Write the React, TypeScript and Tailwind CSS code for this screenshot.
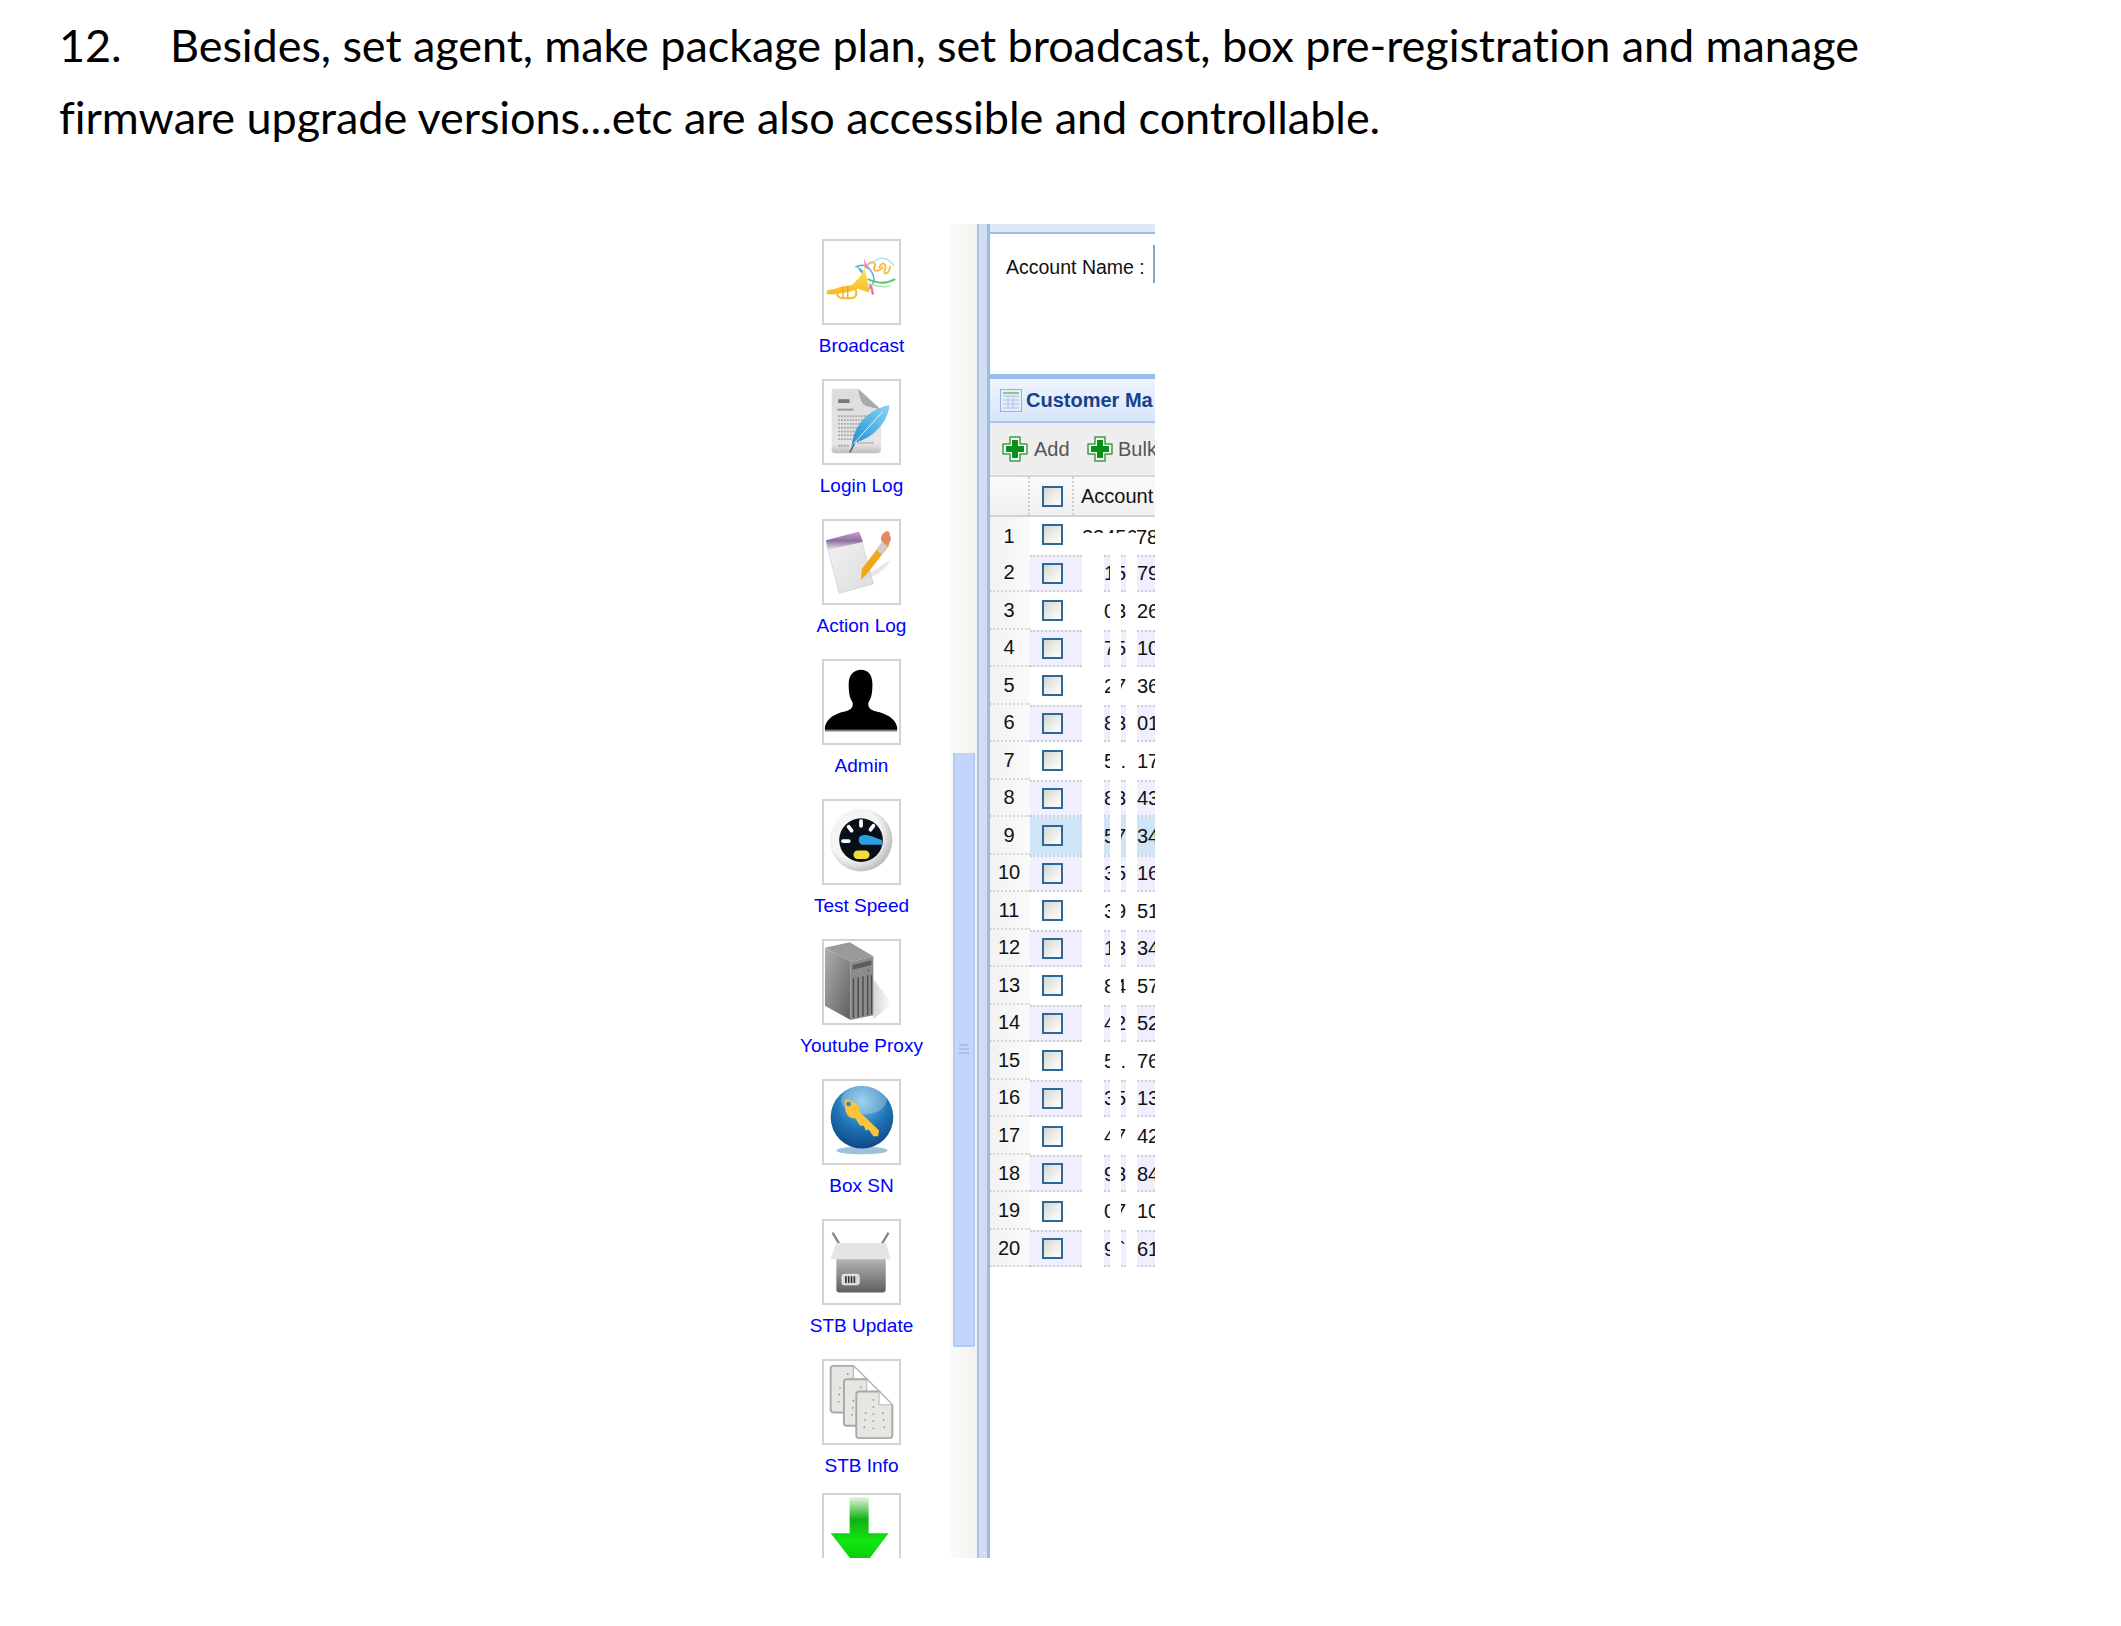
import React from "react";

const rows = [
  ["1", "5", "79"], ["0", "3", "26"], ["7", "5", "10"], ["2", "7", "36"], ["8", "3", "01"],
  ["5", ".", "17"], ["8", "3", "43"], ["5", "7", "34"], ["3", "5", "16"], ["3", "9", "51"],
  ["1", "3", "34"], ["8", "4", "57"], ["4", "2", "52"], ["5", ".", "76"], ["3", "5", "13"],
  ["4", "7", "42"], ["9", "3", "84"], ["0", "7", "10"], ["9", "`", "61"],
];

function Trumpet() {
  return (
    <svg viewBox="0 0 79 86" className="w-full h-full">
      <defs>
        <linearGradient id="tr" x1="0" y1="0" x2="0" y2="1">
          <stop offset="0" stopColor="#ffe566" />
          <stop offset="1" stopColor="#f8b81c" />
        </linearGradient>
      </defs>
      <path d="M33 27 C40 24 47 24 52 36 C54 42 51 48 46 51" fill="none" stroke="#3fb6e8" strokeWidth="1.5" />
      <path d="M44 28 C50 18 56 22 53 28 C51 32 58 33 62 27" fill="none" stroke="#ffb347" strokeWidth="2" />
      <path d="M50 24 C60 14 68 18 74 26" fill="none" stroke="#a8e6ee" strokeWidth="1.5" />
      <path d="M58 28 C62 20 66 24 64 30 C62 36 68 36 70 26" fill="none" stroke="#f5c040" strokeWidth="2" />
      <path d="M46 40 C56 44 64 46 75 40" fill="none" stroke="#50c878" strokeWidth="2" />
      <path d="M47 45 C54 47 62 50 70 47" fill="none" stroke="#a8e6a8" strokeWidth="1.5" />
      <path d="M48 46 C52 50 50 54 52 56" fill="none" stroke="#f070b0" strokeWidth="2.5" />
      <path d="M34 26 L40 30 L44 38 L38 32 Z" fill="#40b0e0" />
      <path d="M42 18 L47 30 L43 28 Z" fill="#f080c0" />
      <path d="M3 52 L30 46 L39 36 L43 28 L48 54 L36 50 L28 53 L12 56 L3 56 Z" fill="url(#tr)" />
      <rect x="14" y="49" width="20" height="11" rx="5" fill="none" stroke="#f8c030" strokeWidth="2.5" />
      <path d="M20 48 V59 M25 47 V59" stroke="#f0a818" strokeWidth="1.5" />
    </svg>
  );
}

function LoginDoc() {
  return (
    <svg viewBox="0 0 79 86" className="w-full h-full">
      <defs>
        <linearGradient id="pg" x1="0" y1="0" x2="0" y2="1">
          <stop offset="0" stopColor="#dcdcdc" />
          <stop offset="0.85" stopColor="#e6e6e6" />
          <stop offset="1" stopColor="#bdbdbd" />
        </linearGradient>
        <linearGradient id="fe" x1="0" y1="1" x2="1" y2="0">
          <stop offset="0" stopColor="#1b8ed0" />
          <stop offset="1" stopColor="#8ad4f5" />
        </linearGradient>
      </defs>
      <path d="M8 11 Q8 8 11 8 H36 L60 30 V72 Q60 76 56 76 H12 Q8 76 8 72 Z" fill="url(#pg)" />
      <path d="M36 8 L60 30 L44 26 Q38 24 36 8 Z" fill="#a9a9a9" />
      <rect x="15" y="19" width="12" height="4" fill="#777" />
      <rect x="14" y="29" width="17" height="2" fill="#999" />
      <path d="M15 37 H50 M15 41 H44 M15 45 H42 M15 49 H38 M15 53 H36 M15 57 H33 M15 61 H30 M35 65 H52 M15 68 H27" stroke="#aaa" strokeWidth="2" strokeDasharray="2 1" />
      <path d="M29 70 C30 50 44 30 69 25 C68 42 52 60 34 64 Z" fill="url(#fe)" />
      <path d="M27 74 L31 66 L62 32" fill="none" stroke="#e8f6fd" strokeWidth="1" />
      <path d="M27 75 L32 66" stroke="#555" strokeWidth="1.5" />
    </svg>
  );
}

function Notepad() {
  return (
    <svg viewBox="0 0 79 86" className="w-full h-full">
      <defs>
        <linearGradient id="np" x1="0" y1="0" x2="1" y2="1">
          <stop offset="0" stopColor="#f4f2f5" />
          <stop offset="1" stopColor="#dcdcdc" />
        </linearGradient>
        <linearGradient id="pu" x1="0" y1="0" x2="0" y2="1">
          <stop offset="0" stopColor="#c9a5c9" />
          <stop offset="0.5" stopColor="#8d6f9d" />
          <stop offset="1" stopColor="#e9e3ef" />
        </linearGradient>
      </defs>
      <path d="M3 25 L38 14 L52 66 L16 76 Z" fill="url(#np)" stroke="#bbb" strokeWidth="0.5" />
      <path d="M2 20 L37 11 L41 22 L4 30 Z" fill="url(#pu)" />
      <path d="M40 50 L63 20 L69 25 L45 56 L39 62 Z" fill="#f0a818" />
      <path d="M55 30 L62 20 L68 24 L61 35 Z" fill="#cfcfcf" />
      <path d="M60 20 C60 10 70 8 69 14 C72 18 70 23 66 26 Z" fill="#e08a60" />
      <path d="M45 56 C55 52 62 44 70 42 C62 54 54 58 44 60 Z" fill="#d8d8d8" opacity="0.6" />
    </svg>
  );
}

function Admin() {
  return (
    <svg viewBox="0 0 79 86" className="w-full h-full">
      <path d="M1 69 C3 60 12 55 22 53 C30 51 31 47 30 43 C27 39 26 33 26 24 C26 14 32 9 39 9 C46 9 51 14 51 24 C51 33 50 39 47 43 C46 47 47 51 55 53 C65 55 75 60 77 69 V73 H1 Z" fill="#000" />
      <rect x="1" y="72" width="76" height="2" fill="#777" />
    </svg>
  );
}

function Gauge() {
  return (
    <svg viewBox="0 0 79 86" className="w-full h-full">
      <defs>
        <radialGradient id="ri" cx="0.4" cy="0.4" r="0.7">
          <stop offset="0.6" stopColor="#f4f4f4" />
          <stop offset="1" stopColor="#a8a8a8" />
        </radialGradient>
      </defs>
      <circle cx="39" cy="41" r="33" fill="url(#ri)" />
      <circle cx="39" cy="41" r="23" fill="#071018" />
      <g stroke="#fff" strokeWidth="4" strokeLinecap="round">
        <path d="M20 42 H26" />
        <path d="M26 27 L29 31" />
        <path d="M39 21 V26" />
        <path d="M52 26 L49 30" />
      </g>
      <path d="M37 38 C41 34 46 35 61 41 V46 H41 C37 46 36 41 37 38 Z" fill="#2e9fdc" />
      <rect x="31" y="52" width="17" height="9" rx="4.5" fill="#f2dc3c" />
    </svg>
  );
}

function Server() {
  return (
    <svg viewBox="0 0 79 86" className="w-full h-full">
      <defs>
        <linearGradient id="sf" x1="0" y1="0" x2="1" y2="1">
          <stop offset="0" stopColor="#b0b0b0" />
          <stop offset="1" stopColor="#5f5f5f" />
        </linearGradient>
        <linearGradient id="sh" x1="0" y1="0" x2="1" y2="0">
          <stop offset="0" stopColor="#d4d4d4" />
          <stop offset="1" stopColor="#fff" />
        </linearGradient>
      </defs>
      <path d="M52 40 L72 66 L52 82 Z" fill="url(#sh)" />
      <path d="M1 7 L27 1 L52 16 L28 22 Z" fill="#9a9a9a" />
      <path d="M1 7 L28 22 V83 L1 68 Z" fill="url(#sf)" />
      <path d="M28 22 L52 16 V78 L28 83 Z" fill="#8c8c8c" />
      <path d="M30 25 L50 20 V25 L30 30 Z" fill="#5c5c5c" />
      <circle cx="47" cy="31" r="1.5" fill="#3c9c4c" />
      <path d="M31 39 V81 M36 38 V80 M41 37 V79 M46 36 V78 M50 36 V77" stroke="#4c4c4c" strokeWidth="1.5" />
    </svg>
  );
}

function KeyBall() {
  return (
    <svg viewBox="0 0 79 86" className="w-full h-full">
      <defs>
        <radialGradient id="bl" cx="0.5" cy="0.25" r="0.85">
          <stop offset="0" stopColor="#7cc4ec" />
          <stop offset="0.5" stopColor="#1f74b6" />
          <stop offset="1" stopColor="#0a3a78" />
        </radialGradient>
      </defs>
      <ellipse cx="40" cy="73" rx="27" ry="4" fill="#9dc2de" />
      <circle cx="40" cy="38" r="33" fill="url(#bl)" />
      <ellipse cx="42" cy="20" rx="24" ry="15" fill="#fff" opacity="0.25" />
      <path d="M22 20 C22 19 28 19 30 22 C36 23 38 28 37 32 L58 52 L57 58 L52 58 L47 51 L44 52 L42 47 L38 47 L33 39 C26 40 21 34 22 20 Z" fill="#fdc33a" />
      <circle cx="26" cy="24" r="2.5" fill="#3a8ac4" />
    </svg>
  );
}

function StbBox() {
  return (
    <svg viewBox="0 0 79 86" className="w-full h-full">
      <defs>
        <linearGradient id="bx" x1="0" y1="0" x2="0" y2="1">
          <stop offset="0" stopColor="#b4b4b4" />
          <stop offset="1" stopColor="#5e5e5e" />
        </linearGradient>
      </defs>
      <path d="M9 12 L16 24 M68 12 L61 24" stroke="#888" strokeWidth="2.5" />
      <path d="M12 25 Q12 23 15 23 H63 Q66 23 66 25 L70 40 H7 Z" fill="#e4e4e4" />
      <path d="M13 40 H65 V72 Q65 75 62 75 H16 Q13 75 13 72 Z" fill="url(#bx)" />
      <rect x="19" y="56" width="18" height="11" rx="2" fill="#d8d8d8" stroke="#eee" />
      <path d="M23 58 V65 M26 58 V65 M29 58 V65 M32 58 V65" stroke="#333" strokeWidth="1.7" />
    </svg>
  );
}

function Page({ x, y }: { x: number; y: number }) {
  return (
    <g transform={`translate(${x} ${y})`}>
      <path d="M0 3 Q0 0 3 0 H24 L38 14 V46 Q38 49 35 49 H3 Q0 49 0 46 Z" fill="#e6e6e3" stroke="#a8a8a8" strokeWidth="2" />
      <path d="M24 0 V14 H38 Z" fill="#fff" stroke="#b0b0b0" />
      <path d="M18 8 V42 M10 22 L8 42 M28 22 L30 42" stroke="#888" strokeWidth="1.5" strokeDasharray="1.5 6" />
    </g>
  );
}

function Docs() {
  return (
    <svg viewBox="0 0 79 86" className="w-full h-full">
      <Page x={7} y={5} />
      <Page x={21} y={19} />
      <Page x={34} y={32} />
    </svg>
  );
}

function Arrow() {
  return (
    <svg viewBox="0 0 79 86" className="w-full h-full">
      <defs>
        <linearGradient id="ar" x1="0" y1="0" x2="0" y2="1">
          <stop offset="0" stopColor="#e6f5e6" />
          <stop offset="0.3" stopColor="#12b012" />
          <stop offset="0.6" stopColor="#10e810" />
          <stop offset="1" stopColor="#08b808" />
        </linearGradient>
      </defs>
      <path d="M27 2 H47 V40 H68 L38 80 L7 40 H27 Z" fill="url(#ar)" />
    </svg>
  );
}

function Cross() {
  return (
    <svg viewBox="0 0 26 26" className="w-[26px] h-[26px] shrink-0">
      <path d="M8 1 H18 V8 H25 V18 H18 V25 H8 V18 H1 V8 H8 Z" fill="#f4fbf4" stroke="#3f9a4f" strokeWidth="1.5" strokeLinejoin="round" />
      <path d="M10 4 H16 V10 H22 V16 H16 V22 H10 V16 H4 V10 H10 Z" fill="#0a8f18" />
    </svg>
  );
}

function GridIcon() {
  return (
    <svg viewBox="0 0 22 23" className="w-[22px] h-[23px] shrink-0">
      <rect x="0.5" y="0.5" width="21" height="22" fill="#e4eefa" stroke="#8fb4e4" />
      <rect x="3" y="3" width="16" height="2" fill="#8cc68c" />
      <path d="M3 7 H19 M3 11 H19 M3 15 H19 M3 19 H19 M8 7 V19 M13 7 V19" stroke="#a8c4e8" strokeWidth="1" />
    </svg>
  );
}

function Check() {
  return <div className="w-[21px] h-[21px] border-2 border-[#2f6796] bg-gradient-to-br from-[#d8d8d2] to-white" />;
}

function Row({ n, cells }: { n: number; cells: string[] }) {
  const alt = n % 2 === 0;
  const hover = n === 9;
  const bg = hover ? "bg-[#cfe4f6]" : alt ? "bg-[#efefff]" : "bg-white";
  const dots = alt ? "border-dotted border-y-2 border-[#cfcfcf]" : "";
  return (
    <div className="flex h-[37.53px] text-[20px] leading-none text-[#111] shrink-0">
      <div className="w-[40px] h-full flex items-center justify-center pr-[2px] bg-gradient-to-r from-[#f2f2f2] to-[#fafafa] border-b-2 border-dotted border-[#d8d8d8]">
        {n}
      </div>
      <div className={`w-[52px] h-full flex pl-[12px] items-center ${bg} ${dots}`}>
        <Check />
      </div>
      <div className="w-[22px]" />
      <div className={`w-[6px] h-full overflow-hidden flex items-center ${bg} ${dots}`}>{cells[0]}</div>
      <div className="w-[11px]" />
      <div className={`w-[5px] h-full overflow-hidden flex items-center justify-end ${bg} ${dots}`}>{cells[1]}</div>
      <div className="w-[11px]" />
      <div className={`flex-1 h-full overflow-hidden flex items-center whitespace-nowrap ${bg} ${dots}`}>{cells[2]}</div>
    </div>
  );
}

const items = [
  { label: "Broadcast", icon: <Trumpet /> },
  { label: "Login Log", icon: <LoginDoc /> },
  { label: "Action Log", icon: <Notepad /> },
  { label: "Admin", icon: <Admin /> },
  { label: "Test Speed", icon: <Gauge /> },
  { label: "Youtube Proxy", icon: <Server /> },
  { label: "Box SN", icon: <KeyBall /> },
  { label: "STB Update", icon: <StbBox /> },
  { label: "STB Info", icon: <Docs /> },
];

export default function App() {
  return (
    <div className="w-[2121px] h-[1626px] bg-white overflow-hidden font-['Lato',sans-serif]">
      <div className="pt-[9px] pl-[59px] text-[45px] leading-[72px] text-black whitespace-nowrap tracking-[-0.06px]">
        <div>
          <span className="inline-block w-[111px]">12.</span>
          Besides, set agent, make package plan, set broadcast, box pre-registration and manage
        </div>
        <div>firmware upgrade versions...etc are also accessible and controllable.</div>
      </div>

      <div className="mt-[71px] ml-[780px] w-[375px] h-[1334px] flex overflow-hidden font-['Liberation_Sans',sans-serif]">
        {/* icon menu */}
        <div className="w-[171px] shrink-0 pt-[15px] flex flex-col items-center pr-[8px]">
          {items.map((it) => (
            <div key={it.label} className={`w-full flex flex-col items-center shrink-0 ${it.label === "STB Info" ? "h-[134px]" : "h-[140px]"}`}>
              <div className="w-[79px] h-[86px] border-2 border-[#d2d2d2] overflow-hidden">{it.icon}</div>
              <div className="mt-[7px] text-[19px] leading-[28px] text-[#0000ff] whitespace-nowrap">{it.label}</div>
            </div>
          ))}
          <div className="w-[79px] h-[86px] border-2 border-[#d2d2d2] overflow-hidden shrink-0">
            <Arrow />
          </div>
        </div>

        {/* scrollbar */}
        <div className="w-[26px] shrink-0 pt-[529px] pl-[2px] bg-gradient-to-r from-[#fafafa] to-[#f2f2ee]">
          <div className="w-[22px] h-[594px] bg-[#c3d5fb] border-x-2 border-b-2 border-[#b4ccf0] rounded-b-[2px] flex items-end justify-center pb-[291px]">
            <div className="w-[10px] h-[10px] border-y-2 border-[#a9bfe8] relative after:absolute after:left-0 after:right-0 after:top-[2px] after:h-[2px] after:bg-[#a9bfe8]" />
          </div>
        </div>

        {/* splitter */}
        <div className="w-[13px] shrink-0 bg-[#d0def0] border-l-2 border-[#a9c4e6] border-r-[3px] border-r-[#99bbe8]" />

        {/* customer panel */}
        <div className="w-[165px] shrink-0 overflow-hidden flex flex-col">
          <div className="h-[10px] bg-[#dfe8f6] border-b-2 border-[#99bbe8] shrink-0" />
          <div className="h-[140px] shrink-0 flex items-start pl-[16px] pt-[11px] bg-white">
            <span className="text-[19.5px] leading-[38px] mt-[3px] text-[#111] whitespace-nowrap">Account Name :</span>
            <div className="ml-auto w-[2px] h-[38px] bg-[#8aa5c8]" />
          </div>
          <div className="h-[5px] bg-[#99bbe8] shrink-0" />
          <div className="h-[44px] shrink-0 flex items-center gap-[4px] pl-[10px] bg-gradient-to-b from-[#eef4fd] to-[#d8e5f9] border-b-2 border-[#a9c4ee] overflow-hidden whitespace-nowrap">
            <GridIcon />
            <span className="text-[20px] font-bold text-[#15428b]">Customer Ma</span>
          </div>
          <div className="h-[54px] shrink-0 flex items-center pl-[12px] bg-[#eeeeee] border-b-2 border-[#d8d8d8] overflow-hidden whitespace-nowrap text-[20px] text-[#555]">
            <Cross />
            <span className="ml-[6px] w-[53px] shrink-0">Add</span>
            <Cross />
            <span className="ml-[5px] shrink-0">Bulk</span>
          </div>
          <div className="h-[40px] shrink-0 flex items-center bg-gradient-to-b from-[#fafafa] to-[#f0f0f0] border-b-2 border-[#d2d2d2] whitespace-nowrap text-[20px] text-[#111]">
            <div className="w-[40px] h-full border-r-2 border-dotted border-[#d0d0d0]" />
            <div className="w-[44px] h-full border-r-2 border-dotted border-[#d0d0d0] flex items-center pl-[12px]">
              <Check />
            </div>
            <span className="ml-[7px]">Account</span>
          </div>
          <div className="flex h-[37.53px] text-[20px] leading-none text-[#111] shrink-0">
            <div className="w-[40px] shrink-0 h-full flex items-center justify-center pr-[2px] bg-gradient-to-r from-[#f2f2f2] to-[#fafafa]">1</div>
            <div className="w-[44px] shrink-0 h-full flex items-center pl-[12px] pb-[2px]">
              <Check />
            </div>
            <div className="ml-[8px] shrink-0 mt-[10px] h-[6px] w-[54px] overflow-hidden">22456</div>
            <div className="mt-[10px] shrink-0">78</div>
          </div>
          {rows.map((cells, i) => (
            <Row key={i} n={i + 2} cells={cells} />
          ))}
        </div>
      </div>
    </div>
  );
}
